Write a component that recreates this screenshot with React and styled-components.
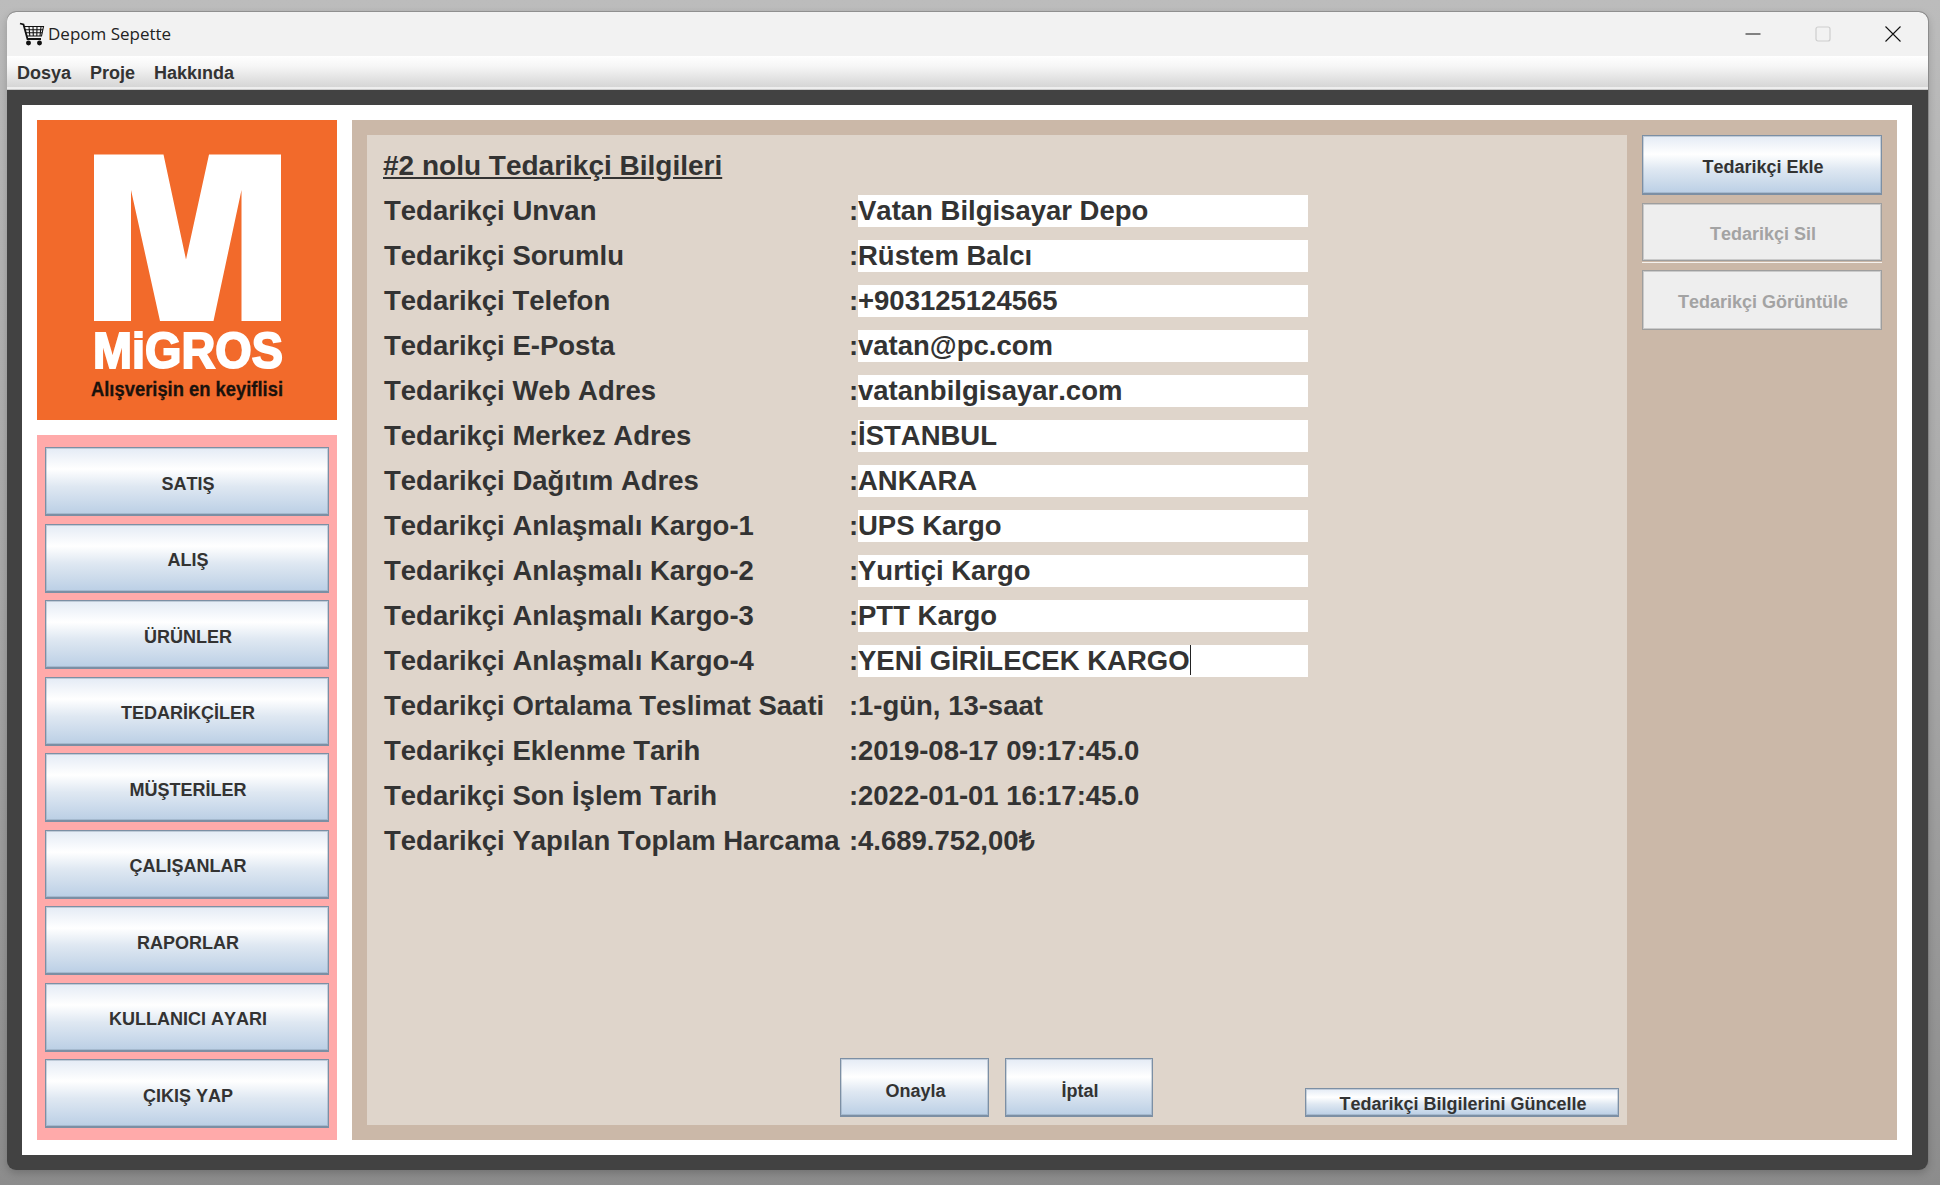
import React from 'react'
import styled, { createGlobalStyle } from 'styled-components'

const GlobalStyle = createGlobalStyle`
    html, body {
        margin: 0;
        padding: 0;
        height: 100%;
    }
    body {
        width: 1940px;
        height: 1185px;
        overflow: hidden;
        background: linear-gradient(180deg, #bcbcbc 0%, #a8a8a8 50%, #8c8c8c 100%);
        font-family: "Liberation Sans", Arial, sans-serif;
        font-kerning: none;
    }
`

const Desktop = styled.div`
    box-sizing: border-box;
    width: 1940px;
    height: 1185px;
    padding: 12px 12px 15px 7px;
`

const Window = styled.div`
    display: flex;
    flex-direction: column;
    height: 100%;
    border-radius: 9px;
    overflow: hidden;
    background: #424242;
    box-shadow: 0 -1px 0 rgba(120, 120, 120, 0.6), 1px 0 0 rgba(120, 120, 120, 0.6), 0 3px 8px rgba(0, 0, 0, 0.2);
`

const TitleBar = styled.div`
    display: flex;
    align-items: center;
    flex: 0 0 44px;
    padding-left: 12px;
    background: #f2f2f2;
`

const TitleText = styled.span`
    margin: -2px 0 0 3px;
    font-family: "Open Sans", "Noto Sans", sans-serif;
    font-size: 17px;
    color: #222;
`

const WindowControls = styled.div`
    display: flex;
    margin-left: auto;
    padding-right: 27px;
    gap: 54px;
    align-items: center;
`

const MenuBar = styled.div`
    display: flex;
    align-items: center;
    box-sizing: border-box;
    flex: 0 0 34px;
    padding: 0 0 0 10px;
    gap: 19px;
    background: linear-gradient(180deg, #ffffff 0%, #f6f6f6 30%, #d6d6d6 90%, #eeeeee 91%, #eeeeee 97%, #a8a8a8 100%);
`

const MenuItem = styled.span`
    font-size: 18px;
    font-weight: bold;
    color: #333;
`

const Frame = styled.div`
    flex: 1;
    min-height: 0;
    padding: 15px 16px 15px 15px;
`

const Content = styled.div`
    box-sizing: border-box;
    display: grid;
    grid-template-columns: 300px 1545px;
    gap: 15px;
    height: 100%;
    padding: 15px;
    background: #ffffff;
`

const Side = styled.div`
    display: flex;
    flex-direction: column;
    gap: 15px;
    min-height: 0;
`

const Logo = styled.div`
    flex: 0 0 300px;
    height: 300px;
    background: #f26a2b;
`

const SideMenu = styled.div`
    flex: 1;
    box-sizing: border-box;
    display: flex;
    flex-direction: column;
    justify-content: space-between;
    padding: 12px 8px;
    background: #ffaaaa;
`

const Button = styled.button`
    box-sizing: border-box;
    display: block;
    width: ${(p) => p.$width || '100%'};
    height: ${(p) => p.$height || '69px'};
    margin: 0;
    margin-left: ${(p) => (p.$push ? 'auto' : '0')};
    padding: ${(p) => p.$pad || '6px'} 0 0 2px;
    border: 1px solid #7c8fa4;
    border-bottom-width: 2px;
    box-shadow: inset 0 0 0 1px rgba(124, 143, 164, 0.35);
    background: linear-gradient(180deg, #e4ebf5 0%, #ffffff 32%, #dfe8f2 58%, #bbcfe5 100%);
    font-family: "Liberation Sans", Arial, sans-serif;
    font-size: 18px;
    font-kerning: none;
    font-weight: bold;
    color: #333;
    text-align: center;

    &:disabled {
        border: 1px solid #9e9e9e;
        box-shadow: inset 0 0 0 1px rgba(158, 158, 158, 0.45);
        background: #eeeeee;
        color: #a3a3a3;
    }
`

const Main = styled.div`
    display: grid;
    grid-template-columns: 1260px 240px;
    gap: 15px;
    min-height: 0;
    padding: 15px;
    background: #cbb8a8;
`

const InfoPanel = styled.div`
    display: flex;
    flex-direction: column;
    background: #dfd5cb;
`

const Title = styled.h2`
    height: 30px;
    margin: 16px 0 14px 16px;
    font-size: 28px;
    line-height: 30px;
    font-weight: bold;
    color: #333;
    text-decoration: underline;
`

const Rows = styled.div`
    flex: 1;
    display: flex;
    flex-direction: column;
    gap: 15px;
`

const Row = styled.div`
    display: grid;
    grid-template-columns: 465px 9px 450px;
    height: 30px;
    padding-left: 17px;
    font-size: 27.5px;
    line-height: 32px;
    font-weight: bold;
    color: #333;
    white-space: nowrap;
`

const Field = styled.div`
    background: ${(p) => (p.$editable ? '#ffffff' : 'transparent')};
`

const Caret = styled.span`
    display: inline-block;
    width: 1px;
    height: 30px;
    vertical-align: top;
    background: #222;
`

const Footer = styled.div`
    display: flex;
    align-items: flex-end;
    gap: 16px;
    padding: 0 8px 8px 473px;
`

const Rail = styled.div`
    display: flex;
    flex-direction: column;
    gap: 8px;
`

const WhiteLine = styled.div`
    height: 1px;
    margin: -7px 0 -1px 0;
    background: #f4f1ee;
`

const CartIcon = () => (
    <svg width="26" height="26" viewBox="0 0 26 26" fill="none" stroke="#111" strokeWidth="1.1">
        <path d="M1 2.5 L4.5 3.5 L8.5 18 H22" strokeWidth="1.8" />
        <path d="M5.5 5.5 H24.5 L22.5 15 H7.8" />
        <path d="M6 8.7 H24 M6.8 11.8 H23.3" />
        <path d="M10 5.5 L10.8 15 M14 5.5 L14.3 15 M18 5.5 L17.8 15 M22 5.5 L21 15" />
        <circle cx="9.5" cy="22" r="1.9" fill="#111" />
        <circle cx="20.5" cy="22" r="1.9" fill="#111" />
    </svg>
)

const Controls = () => (
    <WindowControls>
        <svg width="16" height="16" viewBox="0 0 16 16">
            <path d="M0.5 8 H15.5" stroke="#111" strokeWidth="1" />
        </svg>
        <svg width="16" height="16" viewBox="0 0 16 16" fill="none">
            <rect x="1" y="1" width="14" height="14" rx="2" stroke="#cdcdcd" strokeWidth="1.2" />
        </svg>
        <svg width="16" height="16" viewBox="0 0 16 16">
            <path d="M0.5 0.5 L15.5 15.5 M15.5 0.5 L0.5 15.5" stroke="#111" strokeWidth="1.1" />
        </svg>
    </WindowControls>
)

const MigrosLogo = () => (
    <svg width="300" height="300" viewBox="0 0 300 300">
        <polygon
            fill="#ffffff"
            points="57,34.500 126.500,34.500 149,139.500 172,34.500 244,34.500 244,201 204.500,201 204.500,70 176.500,201 123,201 94,70 94,201 57,201"
        />
        <text
            x="56"
            y="248"
            textLength="190"
            lengthAdjust="spacingAndGlyphs"
            fontFamily="'Liberation Sans', Arial, sans-serif"
            fontSize="50"
            fontWeight="bold"
            fill="#ffffff"
            stroke="#ffffff"
            strokeWidth="2"
        >
            MiGROS
        </text>
        <text
            x="54"
            y="276"
            textLength="192"
            lengthAdjust="spacingAndGlyphs"
            fontFamily="'Liberation Sans', Arial, sans-serif"
            fontSize="20"
            fontWeight="bold"
            fill="#1a120c"
            stroke="#1a120c"
            strokeWidth="0.3"
        >
            Alışverişin en keyiflisi
        </text>
    </svg>
)

const menuButtons = ['SATIŞ', 'ALIŞ', 'ÜRÜNLER', 'TEDARİKÇİLER', 'MÜŞTERİLER', 'ÇALIŞANLAR', 'RAPORLAR', 'KULLANICI AYARI', 'ÇIKIŞ YAP']

const rows = [
    { label: 'Tedarikçi Unvan', value: 'Vatan Bilgisayar Depo', editable: true },
    { label: 'Tedarikçi Sorumlu', value: 'Rüstem Balcı', editable: true },
    { label: 'Tedarikçi Telefon', value: '+903125124565', editable: true },
    { label: 'Tedarikçi E-Posta', value: 'vatan@pc.com', editable: true },
    { label: 'Tedarikçi Web Adres', value: 'vatanbilgisayar.com', editable: true },
    { label: 'Tedarikçi Merkez Adres', value: 'İSTANBUL', editable: true },
    { label: 'Tedarikçi Dağıtım Adres', value: 'ANKARA', editable: true },
    { label: 'Tedarikçi Anlaşmalı Kargo-1', value: 'UPS Kargo', editable: true },
    { label: 'Tedarikçi Anlaşmalı Kargo-2', value: 'Yurtiçi Kargo', editable: true },
    { label: 'Tedarikçi Anlaşmalı Kargo-3', value: 'PTT Kargo', editable: true },
    { label: 'Tedarikçi Anlaşmalı Kargo-4', value: 'YENİ GİRİLECEK KARGO', editable: true, caret: true },
    { label: 'Tedarikçi Ortalama Teslimat Saati', value: '1-gün, 13-saat' },
    { label: 'Tedarikçi Eklenme Tarih', value: '2019-08-17 09:17:45.0' },
    { label: 'Tedarikçi Son İşlem Tarih', value: '2022-01-01 16:17:45.0' },
    { label: 'Tedarikçi Yapılan Toplam Harcama', value: '4.689.752,00₺' },
]

const App = () => {
    return (
        <Desktop>
            <GlobalStyle />
            <Window>
                <TitleBar>
                    <CartIcon />
                    <TitleText>Depom Sepette</TitleText>
                    <Controls />
                </TitleBar>
                <MenuBar>
                    <MenuItem>Dosya</MenuItem>
                    <MenuItem>Proje</MenuItem>
                    <MenuItem>Hakkında</MenuItem>
                </MenuBar>
                <Frame>
                    <Content>
                        <Side>
                            <Logo>
                                <MigrosLogo />
                            </Logo>
                            <SideMenu>
                                {menuButtons.map((name) => (
                                    <Button key={name}>{name}</Button>
                                ))}
                            </SideMenu>
                        </Side>
                        <Main>
                            <InfoPanel>
                                <Title>#2 nolu Tedarikçi Bilgileri</Title>
                                <Rows>
                                    {rows.map((row) => (
                                        <Row key={row.label}>
                                            <span>{row.label}</span>
                                            <span>:</span>
                                            <Field $editable={row.editable}>
                                                {row.value}
                                                {row.caret && <Caret />}
                                            </Field>
                                        </Row>
                                    ))}
                                </Rows>
                                <Footer>
                                    <Button $width="149px" $height="59px" $pad="8px">Onayla</Button>
                                    <Button $width="148px" $height="59px" $pad="8px">İptal</Button>
                                    <Button $width="314px" $height="29px" $pad="5px" $push>
                                        Tedarikçi Bilgilerini Güncelle
                                    </Button>
                                </Footer>
                            </InfoPanel>
                            <Rail>
                                <Button $height="60px" $pad="5px">Tedarikçi Ekle</Button>
                                <Button $height="58px" $pad="5px" disabled>Tedarikçi Sil</Button>
                                <WhiteLine />
                                <Button $height="60px" $pad="5px" disabled>Tedarikçi Görüntüle</Button>
                            </Rail>
                        </Main>
                    </Content>
                </Frame>
            </Window>
        </Desktop>
    )
}

export default App
